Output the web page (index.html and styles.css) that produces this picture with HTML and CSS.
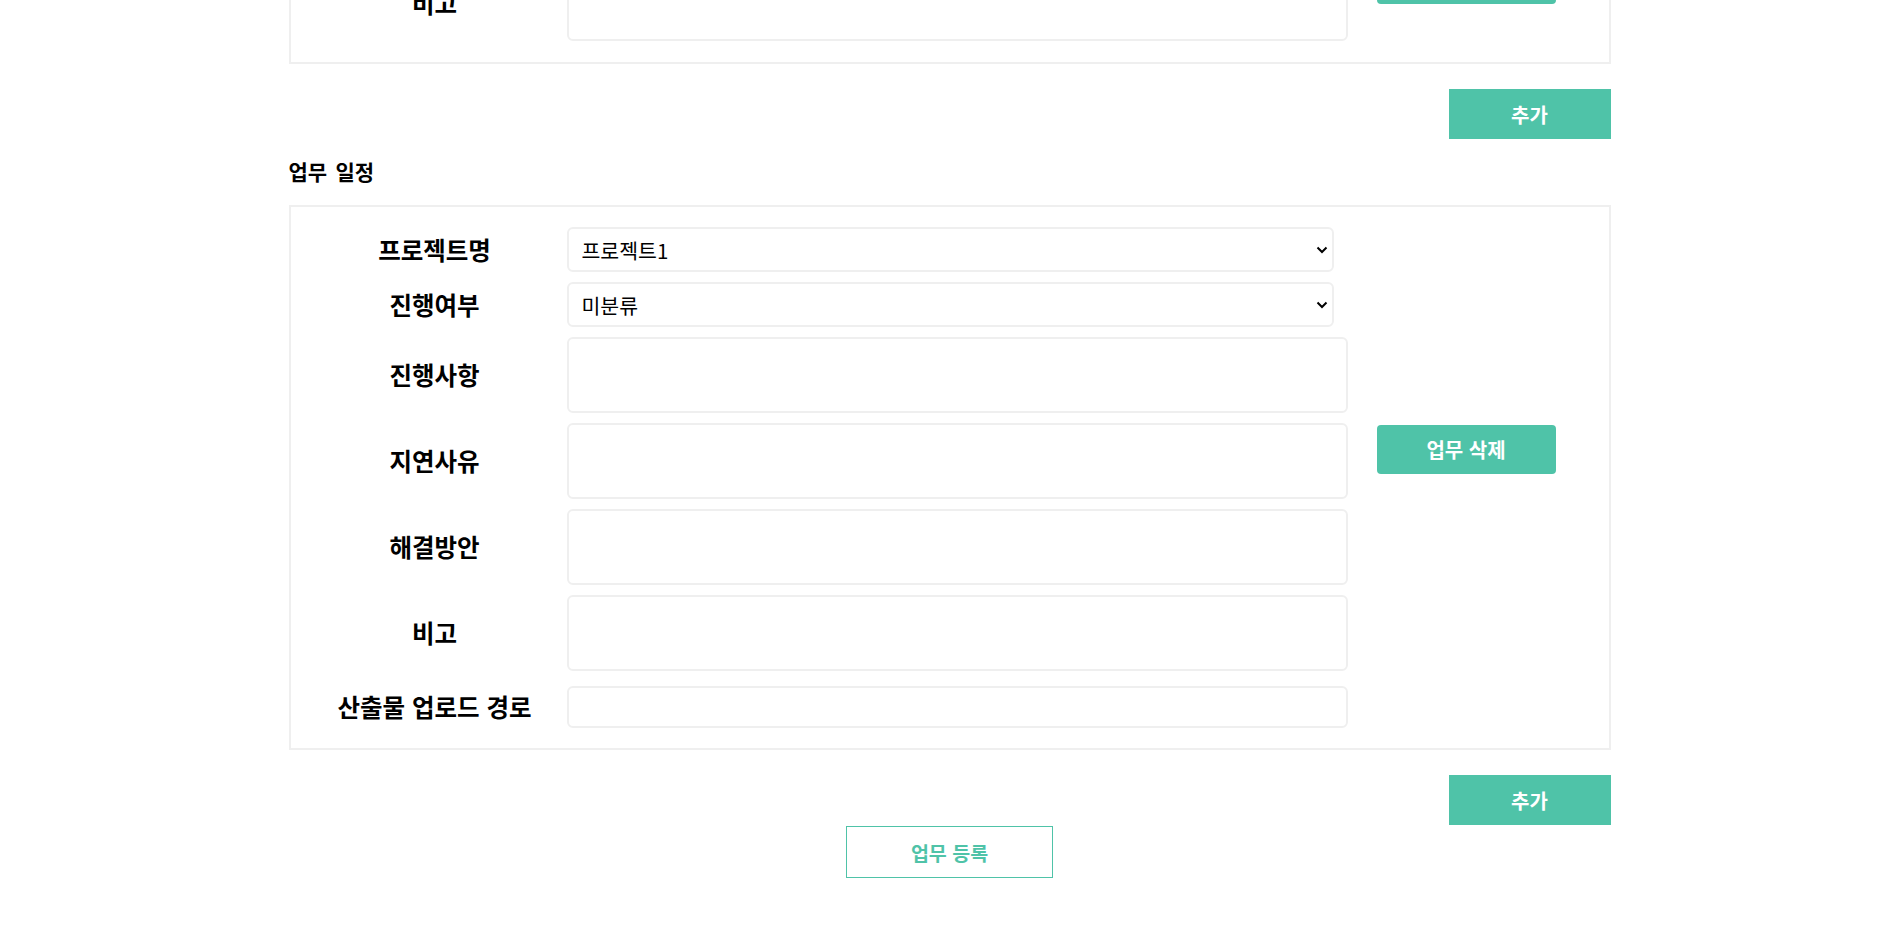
FILE: index.html
```html
<!DOCTYPE html>
<html lang="ko">
<head>
    <meta charset="UTF-8">
    <title>업무 등록</title>
    <link rel="stylesheet" href="styles.css">
</head>
<body>
<div class="wrap">
    <!-- 이전 업무 블록 (스크롤로 위쪽이 잘려 있음) -->
    <div class="box box-prev">
        <div class="box-main">
            <div class="fields">
                <div class="row"><label class="label">링크</label><input class="input input-sm" type="text"></div>
                <div class="row"><label class="label">비고</label><textarea class="area"></textarea></div>
            </div>
            <div class="side"><button class="btn-del">업무 삭제</button></div>
        </div>
    </div>
    <div class="add-line"><button class="btn-add">추가</button></div>

    <h3 class="sec-title">업무 일정</h3>
    <div class="box">
        <div class="box-main">
            <div class="fields">
                <div class="row">
                    <label class="label">프로젝트명</label>
                    <div class="select-wrap">
                        <select class="select">
                            <option>프로젝트1</option>
                            <option>프로젝트2</option>
                        </select>
                        <svg class="chevron" width="12" height="8" viewBox="0 0 12 8"><path d="M1.5 1.5 L6 6 L10.5 1.5" fill="none" stroke="#000" stroke-width="2"/></svg>
                    </div>
                </div>
                <div class="row">
                    <label class="label">진행여부</label>
                    <div class="select-wrap">
                        <select class="select">
                            <option>미분류</option>
                            <option>진행중</option>
                            <option>완료</option>
                        </select>
                        <svg class="chevron" width="12" height="8" viewBox="0 0 12 8"><path d="M1.5 1.5 L6 6 L10.5 1.5" fill="none" stroke="#000" stroke-width="2"/></svg>
                    </div>
                </div>
                <div class="row"><label class="label">진행사항</label><textarea class="area"></textarea></div>
                <div class="row"><label class="label">지연사유</label><textarea class="area"></textarea></div>
                <div class="row"><label class="label">해결방안</label><textarea class="area"></textarea></div>
                <div class="row"><label class="label">비고</label><textarea class="area"></textarea></div>
            </div>
            <div class="side"><button class="btn-del">업무 삭제</button></div>
        </div>
        <div class="row row-path">
            <label class="label">산출물 업로드 경로</label>
            <input class="input" type="text">
        </div>
    </div>
    <div class="add-line"><button class="btn-add">추가</button></div>

    <div class="submit-line"><button class="btn-submit">업무 등록</button></div>
</div>
</body>
</html>
```

FILE: styles.css
```css
* { box-sizing: border-box; }
body { margin: 0; background: #fff; color: #000; font-family: "Noto Sans CJK KR", "Noto Sans", sans-serif; }
.wrap {
    width: 1322px;
    margin: -104px auto 0;
}
.box {
    border: 2px solid #efefef;
    padding: 20px 0;
}
.box-prev { padding-bottom: 21px; }
.box-main {
    display: flex;
    align-items: center;
}
.fields {
    width: 1057px;
    display: flex;
    flex-direction: column;
    gap: 10px;
}
.side { margin-left: 29px; }
.row {
    display: grid;
    grid-template-columns: 276px 781px;
    align-items: center;
}
.row-path { margin-top: 15px; }
.label {
    padding-left: 12px;
    text-align: center;
    font-size: 24.5px;
    font-weight: 700;
    line-height: 1.2;
}
.select, .area, .input {
    border: 2px solid #efefef;
    border-radius: 6px;
    background: #fff;
    color: #000;
    font-family: inherit;
    font-size: 20.5px;
    outline: none;
}
.select-wrap {
    position: relative;
    width: 767px;
}
.select {
    -webkit-appearance: none;
    appearance: none;
    display: block;
    width: 100%;
    height: 45px;
    padding: 0 36px 0 13px;
}
.chevron {
    position: absolute;
    right: 6px;
    top: 19px;
    pointer-events: none;
}
.area {
    display: block;
    width: 781px;
    height: 76px;
    resize: none;
    padding: 8px 12px;
}
.input {
    width: 781px;
    height: 42px;
    padding: 0 12px;
}
.input-sm { height: 37px; }
.btn-del {
    width: 179px;
    height: 49px;
    border: 0;
    border-radius: 4px;
    background: #4fc3a8;
    color: #fff;
    font-family: inherit;
    font-size: 20px;
    font-weight: 700;
    cursor: pointer;
}
.add-line {
    display: flex;
    justify-content: flex-end;
    margin-top: 25px;
}
.btn-add {
    width: 162px;
    height: 50px;
    border: 0;
    background: #4fc3a8;
    color: #fff;
    font-family: inherit;
    font-size: 20px;
    font-weight: 700;
    cursor: pointer;
}
.sec-title {
    margin: 19px 0 21px;
    font-size: 21px;
    font-weight: 700;
    line-height: 26px;
    word-spacing: 0.12em;
}
.submit-line {
    display: flex;
    justify-content: center;
    margin-top: 1px;
}
.btn-submit {
    width: 207px;
    height: 52px;
    border: 1px solid #4fc3a8;
    background: #fff;
    color: #4fc3a8;
    font-family: inherit;
    font-size: 19.5px;
    font-weight: 700;
    cursor: pointer;
}
```
